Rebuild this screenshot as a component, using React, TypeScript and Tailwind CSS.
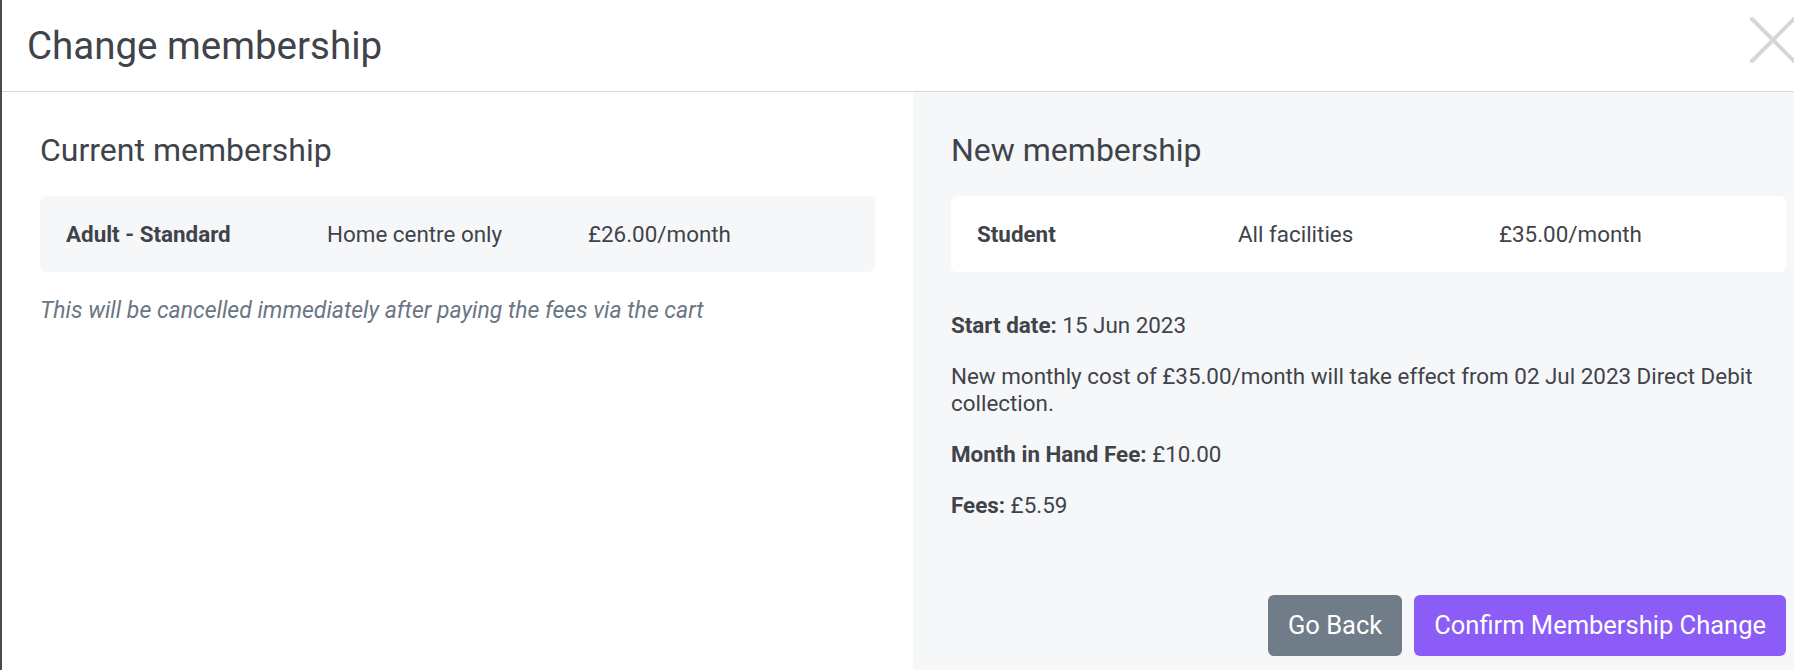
const current = { name: "Adult - Standard", access: "Home centre only", price: "£26.00/month" };
const next = { name: "Student", access: "All facilities", price: "£35.00/month" };

const MembershipCard = ({ item, tone }: { item: typeof current; tone: string }) => (
  <div className={`grid grid-cols-3 items-center h-[76px] px-[26px] rounded-md ${tone}`}>
    <span className="font-bold">{item.name}</span>
    <span>{item.access}</span>
    <span>{item.price}</span>
  </div>
);

export default function App() {
  return (
    <div
      className="flex w-full h-[670px] overflow-hidden bg-[#4a4a4a] text-[#3f434a] text-[22.4px] leading-[27px]"
      style={{ fontFamily: "Roboto, 'Liberation Sans', sans-serif" }}
    >
      <div className="ml-[2px] w-[1822px] shrink-0 bg-white flex flex-col">
        {/* Header */}
        <div className="shrink-0 flex items-center justify-between h-[92px] pl-[25px] pr-[27px] border-b border-[#d5d8dd]">
          <h1 className="text-[38.5px] leading-[48px]">Change membership</h1>
          <svg className="self-start mt-[16px]" width="48" height="48" viewBox="0 0 48 48">
            <path d="M3 3 L45 45 M45 3 L3 45" stroke="#d7d7d7" strokeWidth="4" strokeLinecap="round" fill="none" />
          </svg>
        </div>

        <div className="flex flex-1">
          {/* Current */}
          <div className="w-[911px] shrink-0 px-[38px] pt-[39px]">
            <h2 className="text-[32px] leading-[38px] mb-[27px]">Current membership</h2>
            <MembershipCard item={current} tone="bg-[#f6f7f9]" />
            <p className="mt-[25px] italic text-[23px] text-[#6b7685]">
              This will be cancelled immediately after paying the fees via the cart
            </p>
          </div>

          {/* New */}
          <div className="w-[911px] shrink-0 bg-[#f6f7f9] px-[38px] pt-[39px]">
            <h2 className="text-[32px] leading-[38px] mb-[27px]">New membership</h2>
            <MembershipCard item={next} tone="bg-white" />
            <div className="mt-[40px] flex flex-col gap-[24px]">
              <p>
                <span className="font-bold">Start date:</span> 15 Jun 2023
              </p>
              <p>
                New monthly cost of £35.00/month will take effect from 02 Jul 2023 Direct Debit collection.
              </p>
              <p>
                <span className="font-bold">Month in Hand Fee:</span> £10.00
              </p>
              <p>
                <span className="font-bold">Fees:</span> £5.59
              </p>
            </div>
            <div className="flex justify-end gap-[12px] mt-[76px] text-[25.5px]">
              <button className="h-[61px] px-[20px] rounded-md bg-[#707c88] text-white">Go Back</button>
              <button className="h-[61px] px-[20px] rounded-md bg-[#8b5cf6] text-white">
                Confirm Membership Change
              </button>
            </div>
          </div>
        </div>
      </div>
    </div>
  );
}
